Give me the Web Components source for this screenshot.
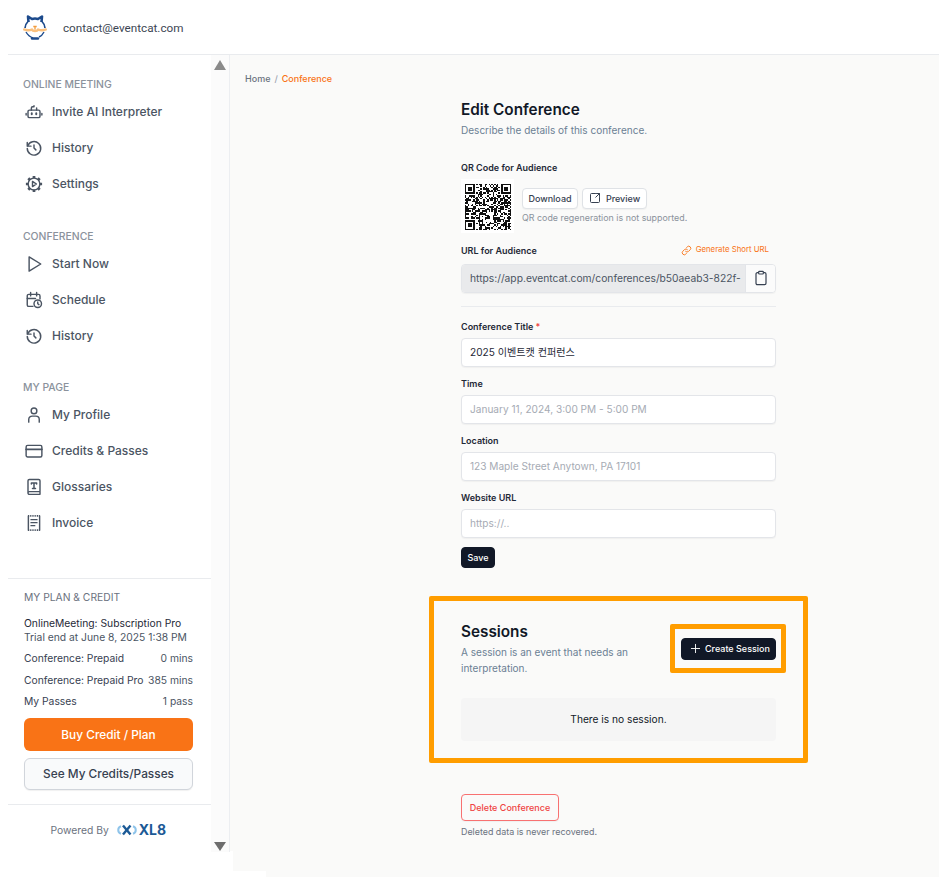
<!DOCTYPE html>
<html lang="en"><head><meta charset="utf-8"><title>Edit Conference</title>
<style>
html,body{margin:0;height:100%;background:#fff;}
body{font-family:Inter,"Noto Sans CJK KR",sans-serif;overflow:hidden;}
</style></head><body>
<ec-app>
  <ec-header slot="header" email="contact@eventcat.com"></ec-header>
  <ec-sidebar slot="sidebar">
    <ec-nav-section label="ONLINE MEETING">
      <ec-nav-item icon="robot">Invite AI Interpreter</ec-nav-item>
      <ec-nav-item icon="history">History</ec-nav-item>
      <ec-nav-item icon="gear">Settings</ec-nav-item>
    </ec-nav-section>
    <ec-nav-section label="CONFERENCE">
      <ec-nav-item icon="play">Start Now</ec-nav-item>
      <ec-nav-item icon="calendar">Schedule</ec-nav-item>
      <ec-nav-item icon="history">History</ec-nav-item>
    </ec-nav-section>
    <ec-nav-section label="MY PAGE">
      <ec-nav-item icon="user">My Profile</ec-nav-item>
      <ec-nav-item icon="card">Credits &amp; Passes</ec-nav-item>
      <ec-nav-item icon="book">Glossaries</ec-nav-item>
      <ec-nav-item icon="receipt">Invoice</ec-nav-item>
    </ec-nav-section>
    <ec-plan slot="footer"></ec-plan>
  </ec-sidebar>
  <ec-main slot="main"></ec-main>
</ec-app>
<script>
const ICONS={
robot:'<path d="M6 9.500h12a2 2 0 0 1 2 2v6a2 2 0 0 1-2 2H6a2 2 0 0 1-2-2v-6a2 2 0 0 1 2-2z"/><path d="M8.500 9.500V6.500a1.500 1.500 0 0 1 1.500-1.500h2V3.500M15.500 9.500V6.500"/><path d="M1.500 14v2M22.500 14v2"/><path d="M9 13.500v1.500M15 13.500v1.500" stroke-width="2.600"/>',
history:'<path d="M12 8v4l2.500 2.500"/><path d="M3.600 9.200A9 9 0 1 1 3 12.500"/><path d="M3 4.500v5h5"/>',
gear:'<circle cx="12" cy="12" r="7.800"/><path d="M12 1.200v3.200M12 19.600v3.200M1.200 12h3.200M19.600 12h3.200M4.400 4.400L6.600 6.600M17.400 17.400l2.200 2.200M4.400 19.600L6.600 17.400M17.400 6.600l2.200-2.200" stroke-width="3.600" stroke-linecap="butt"/><path d="M10 8.600v6.800l5.200-3.400z"/>',
play:'<path d="M5.500 2.500v19l15.500-9.500z"/>',
calendar:'<path d="M10.500 20.500H5a2 2 0 0 1-2-2v-12a2 2 0 0 1 2-2h13a2 2 0 0 1 2 2V10.500"/><path d="M7.500 2v4.500M15.500 2v4.500M3 10h11"/><circle cx="17" cy="17" r="5"/><path d="M17 14.500V17l1.600 1.200"/>',
user:'<circle cx="12" cy="6.500" r="3.800"/><path d="M5 21.500v-3.500A4.500 4.500 0 0 1 9.500 13.500h5a4.500 4.500 0 0 1 4.500 4.500V21.500"/>',
card:'<rect x="1.500" y="4.500" width="21" height="15.500" rx="2"/><path d="M1.500 9.800h21" stroke-width="2.400"/>',
book:'<path d="M5.800 21.800A1.800 1.800 0 0 1 4 20V3.800A1.800 1.800 0 0 1 5.800 2h12.400A1.800 1.800 0 0 1 20 3.800v18H5.800A1.800 1.800 0 0 1 4 20a1.800 1.800 0 0 1 1.800-1.800H20"/><path d="M8.500 8V6.500h7V8M12 6.500V14M10 14h4" stroke-width="2"/>',
receipt:'<path d="M4.500 2.500v19M19.500 2.500v19"/><path d="M4 2.500h16M4 21.500h16" stroke-dasharray="1.400 1" stroke-linecap="butt" stroke-width="2.200"/><path d="M8 7.500h8M8 11.500h8M8 15.500h5"/>',
ext:'<path d="M13 3H5a2 2 0 0 0-2 2v14a2 2 0 0 0 2 2h14a2 2 0 0 0 2-2v-8"/><path d="M13.500 10.500L21 3M15 3h6v6"/>',
link:'<path d="M10 14a4.500 4.500 0 0 0 6.400 0l3.600-3.600A4.500 4.500 0 0 0 13.600 4l-1.300 1.300"/><path d="M14 10a4.500 4.500 0 0 0-6.400 0L4 13.600A4.500 4.500 0 0 0 10.400 20l1.300-1.300"/>',
clip:'<rect x="4.500" y="4" width="15" height="18" rx="2"/><rect x="8.500" y="2" width="7" height="4" rx="1" fill="#fff"/>',
plus:'<path d="M12 3v18M3 12h18"/>'
};
function icon(n,size,sw,color){return `<svg width="${size}" height="${size}" viewBox="0 0 24 24" fill="none" stroke="${color||'currentColor'}" stroke-width="${sw||2}" stroke-linecap="round" stroke-linejoin="round" aria-hidden="true">${ICONS[n]}</svg>`;}
function def(name,css,html,init){
  customElements.define(name,class extends HTMLElement{
    constructor(){super();this.attachShadow({mode:'open'});}
    connectedCallback(){
      this.shadowRoot.innerHTML=`<style>${css}</style>`+(typeof html==='function'?html(this):html);
      if(init)init(this);
    }
  });
}
def('ec-app',`:host{display:grid;grid-template-columns:230px 1fr;grid-template-rows:55px 822px;height:877px;width:939px;background:#fff}
 .h{grid-column:1/3} .s{display:block} .m{display:block;min-width:0}`,
 `<div class="h"><slot name="header"></slot></div><div class="s"><slot name="sidebar"></slot></div><div class="m"><slot name="main"></slot></div>`);
def('ec-header',`:host{display:block;height:55px;margin-left:8px;box-sizing:border-box;border-bottom:1px solid #e9ebee;background:#fff}
 .r{display:flex;align-items:center;height:54px;padding:2px 0 0 15px;box-sizing:border-box;gap:16px;font:11.700px Roboto,sans-serif;color:#3c4653}
 svg{display:block;flex:none}`,
 t=>`<div class="r"><svg width="24" height="26" viewBox="0 0 24 26" fill="none">
  <path d="M5.500 7L5 1.500L9 4A9.500 9.500 0 0 1 15 4L19 1.500L18.500 7" stroke="#1c4a8c" stroke-width="2.600" stroke-linejoin="round"/>
  <path d="M5 6.500A10 10 0 0 0 2 13M19 6.500A10 10 0 0 1 22 13" stroke="#1c4a8c" stroke-width="1.700"/>
  <path d="M.3 14c3 1.500 5.500 1.800 8.500.6c1 1.800 5.400 1.800 6.400 0c3 1.200 5.500 .9 8.500-.6" stroke="#fbc17e" stroke-width="2.400"/>
  <path d="M10.300 11.500h3.400M12 11.500v3" stroke="#f29b3c" stroke-width="1.300"/>
  <path d="M3 17c2 3.500 4 5 7 6M21 17c-1 2-2.500 4-5 5" stroke="#1c4a8c" stroke-width="1.400"/>
  <path d="M9 23.500h6" stroke="#1c4a8c" stroke-width="2.400" stroke-linecap="round"/></svg><span>${t.getAttribute('email')}</span></div>`);
def('ec-sidebar',`:host{display:block;height:100%;position:relative;box-sizing:border-box;background:#fff}
 .track{position:absolute;right:0;top:0;width:18px;height:797px;background:#fbfbfb;border-right:1px solid #eceef1}
 .up,.dn{position:absolute;left:3px;width:0;height:0;border-left:6px solid transparent;border-right:6px solid transparent}
 .up{top:5px;border-bottom:10px solid #8a8a8a}.dn{bottom:1px;border-top:9px solid #6d6d6d}
 .wrap{display:flex;flex-direction:column;height:100%;box-sizing:border-box;padding-top:23px;padding-left:8px}
 .nav{width:203px;height:499px;display:flex;flex-direction:column;gap:27.500px;box-sizing:border-box}`,
 `<div class="track"><div class="up"></div><div class="dn"></div></div><div class="wrap"><div class="nav"><slot></slot></div><slot name="footer"></slot></div>`);
def('ec-nav-section',`:host{display:block;padding-left:15px}
 .l{font:500 10.400px/14px Inter,sans-serif;color:#8b929c;height:14px;margin-bottom:2px}`,
 t=>`<div class="l">${t.getAttribute('label')}</div><slot></slot>`);
def('ec-nav-item',`:host{display:flex;align-items:center;height:36px;color:#4b5563;font:500 12px/36px Inter,sans-serif;padding-left:2px}
 .i{width:20px;height:20px;margin-right:8px;flex:none;display:flex;align-items:center;justify-content:center;margin-left:-1px}`,
 t=>`<span class="i">${icon(t.getAttribute('icon'),18,1.900,'#4a5462')}</span><slot></slot>`);
def('ec-plan',`:host{display:block;width:203px;margin-top:1px;border-top:1px solid #e9ebee;box-sizing:border-box;color:#4b5563;font:400 10.300px/14px Inter,sans-serif;white-space:nowrap}
 .b{padding:11px 18px 13px 16px;height:225px;box-sizing:border-box}
 .t{font-weight:400;color:#6b7280;margin-bottom:12px;font-size:10.300px}
 .d{color:#1f2937}.m{color:#4b5563;margin-bottom:-1px}
 .r{display:flex;justify-content:space-between;margin-top:8px;color:#374151}.r span+span{color:#4b5563}.r.last{margin-top:7px}
 .btn{display:flex;align-items:center;justify-content:center;box-sizing:border-box;width:169px;border-radius:6px;font-weight:500;font-size:11.850px}
 .buy{height:33px;background:#f97316;color:#fff;margin-top:10px}
 .see{height:32px;margin-top:7px;background:#f9fafb;color:#374151;border:1px solid #d1d5db;box-shadow:0 1px 1px #0000000f}
 .f{height:50px;border-top:1px solid #e9ebee;display:flex;align-items:center;padding-left:42.500px;gap:8px;color:#6b7280;font-size:10.300px;box-sizing:border-box}
 .x{display:flex;align-items:center;gap:2px;color:#1c5a96;font:700 14px/1 Inter,sans-serif}`,
 `<div class="b"><div class="t">MY PLAN &amp; CREDIT</div><div class="d">OnlineMeeting: Subscription Pro</div><div class="m">Trial end at June 8, 2025 1:38 PM</div>
 <div class="r"><span>Conference: Prepaid</span><span>0 mins</span></div><div class="r"><span>Conference: Prepaid Pro</span><span>385 mins</span></div><div class="r last"><span>My Passes</span><span>1 pass</span></div>
 <div class="btn buy">Buy Credit / Plan</div><div class="btn see">See My Credits/Passes</div></div>
 <div class="f"><span>Powered By</span><span class="x"><svg width="20" height="12" viewBox="0 0 20 12" fill="none"><path d="M4 2.200A4 4 0 0 0 4 9.800M16 2.200A4 4 0 0 1 16 9.800" stroke="#8fc4ea" stroke-width="2"/><path d="M6 1.500L13.500 10.500" stroke="#1c5a96" stroke-width="2.400"/><path d="M13.500 1.500L6 10.500" stroke="#1c5a96" stroke-width="2.400"/></svg><span>XL8</span></span></div>`);
def('ec-btn',`:host{display:inline-flex;align-items:center;justify-content:center;gap:4px;box-sizing:border-box;height:21px;border-radius:4px;background:#fff;border:1px solid #dfe2e6;color:#374151;font:500 9px/1 Inter,sans-serif;padding:0 6px;box-shadow:0 1px 1px #0000000a}
 :host([kind=dark]){background:#111827;border-color:#111827;color:#fff;box-shadow:none}
 :host([kind=danger]){background:transparent;border-color:#f87171;color:#ef4444;height:27px}
 svg{display:block}`,
 t=>(t.getAttribute('icon')?icon(t.getAttribute('icon'),t.getAttribute('isize')||13,2,t.getAttribute('kind')==='dark'?'#fff':'#374151'):'')+'<slot></slot>');
def('ec-qr',`:host{display:block;width:53px;height:54px;background:#fff;flex:none}svg{display:block;margin:5px 0 0 4px}`,
 `<svg width="46" height="46" viewBox="0 0 33 33" shape-rendering="crispEdges"></svg>`,
 t=>{
  const N=33,g=[];let s=12345;
  const rnd=()=>{s=(s*1103515245+12345)&0x7fffffff;return (s>>16)&1};
  for(let y=0;y<N;y++){g[y]=[];for(let x=0;x<N;x++)g[y][x]=rnd();}
  const finder=(ox,oy)=>{for(let y=-1;y<8;y++)for(let x=-1;x<8;x++){const X=ox+x,Y=oy+y;if(X<0||Y<0||X>=N||Y>=N)continue;
    const ring=(x>=0&&x<=6&&y>=0&&y<=6)&&(x===0||x===6||y===0||y===6);const core=x>=2&&x<=4&&y>=2&&y<=4;g[Y][X]=(ring||core)?1:0;}};
  finder(0,0);finder(N-7,0);finder(0,N-7);
  let d='';for(let y=0;y<N;y++)for(let x=0;x<N;x++)if(g[y][x])d+=`M${x} ${y}h1v1h-1z`;
  t.shadowRoot.querySelector('svg').innerHTML=`<path d="${d}" fill="#111"/>`;
 });
def('ec-field',`:host{display:block;margin-top:9.500px}
 label{display:flex;height:13px;align-items:center;font:600 9px/13px Inter,sans-serif;color:#1f2937;margin-bottom:5px}
 i{color:#ef4444;font-style:normal;margin-left:2px}
 .in{box-sizing:border-box;height:29.500px;background:#fff;border:1px solid #e3e5e9;border-radius:4px;padding:0 8px;font:400 10.100px/27px Inter,"Noto Sans CJK KR",sans-serif;color:#1f2937;box-shadow:0 1px 1px #0000000a;white-space:nowrap;overflow:hidden}
 .ph{color:#a6abb4}`,
 t=>`<label>${t.getAttribute('label')}${t.hasAttribute('required')?'<i>*</i>':''}</label><div class="in ${t.hasAttribute('ph')?'ph':''}">${t.getAttribute('ph')||t.getAttribute('value')}</div>`);
def('ec-form',`:host{display:block;width:315px}
 h2{margin:0;font:600 15.300px/20px Inter,sans-serif;color:#111827}
 p{margin:2px 0 0;font:400 10.040px/16px Inter,sans-serif;color:#6b7f94}
 .lab{font:600 9px/13px Inter,sans-serif;color:#1f2937}
 .qrrow{display:flex;margin-top:4.500px;gap:8px}
 .qa{padding-top:9px;display:flex;flex-direction:column;}
 .bt{display:flex;gap:4px}
 .hint{font:400 8.900px/12px Inter,sans-serif;color:#8b929c;margin-top:3px}
 .u{display:flex;justify-content:space-between;align-items:center;margin-top:10.500px;height:14px}
 .gen{display:flex;align-items:center;gap:4px;color:#f97316;font:400 7.800px/1 Inter,sans-serif;padding-right:7px}
 .url{display:flex;margin-top:6.500px;height:29px;border:1px solid #e3e5e9;border-radius:4px;overflow:hidden;box-sizing:border-box;box-shadow:0 1px 1px #0000000a}
 .url div:first-child{flex:1;background:#e9eaec;color:#4b5563;font:400 10.270px/27px Inter,sans-serif;padding-left:8px;white-space:nowrap;overflow:hidden}
 .url div:last-child{width:29px;background:#fbfbfb;border-left:1px solid #e3e5e9;display:flex;align-items:center;justify-content:center}
 hr{border:0;border-top:1px solid #e9ebee;margin:13px 0 13px}
 ec-btn.save{margin-top:9px;height:21px;width:34px;padding:0;border-radius:4px;display:flex}
 .sec{margin-top:28px;margin-left:-32px;width:379px;height:167px;box-sizing:border-box;border:5px solid #ff9d00;border-radius:2px;padding:21px 27px 0 27px}
 .top{display:flex;justify-content:space-between;align-items:flex-start}
 .top p{width:175px;line-height:16px}
 .hl{border:5px solid #ff9d00;border-radius:2px;margin:2px -10px 0 0;box-sizing:border-box;width:116px;height:49px;display:flex;align-items:center;padding:0 5px 0 6px;flex:none}
 .hl ec-btn{height:22px;width:95px;padding:0 0 0 8px;justify-content:flex-start;gap:4px;flex:none}
 .empty{margin-top:22px;height:43px;background:#f5f5f5;border-radius:4px;display:flex;align-items:center;justify-content:center;font:400 10.200px/1 Inter,sans-serif;color:#111827}
 .del{margin-top:31px;display:flex}
 .note{font:400 8.900px/12px Inter,sans-serif;color:#6b7280;margin-top:5px}`,
 `<h2>Edit Conference</h2><p>Describe the details of this conference.</p>
 <div class="lab" style="margin-top:23px">QR Code for Audience</div>
 <div class="qrrow"><ec-qr></ec-qr><div class="qa"><div class="bt"><ec-btn style="width:56px;padding:0">Download</ec-btn><ec-btn icon="ext" isize="12" style="gap:5px;width:65px;padding:0">Preview</ec-btn></div><div class="hint">QR code regeneration is not supported.</div></div></div>
 <div class="u"><span class="lab">URL for Audience</span><span class="gen">${icon('link',11,2,'#f97316')}Generate Short URL</span></div>
 <div class="url"><div>https://app.eventcat.com/conferences/b50aeab3-822f-</div><div>${icon('clip',16,1.800,'#374151')}</div></div>
 <hr>
 <ec-field style="margin-top:0" label="Conference Title" required value="2025 이벤트캣 컨퍼런스"></ec-field>
 <ec-field label="Time" ph="January 11, 2024, 3:00 PM - 5:00 PM"></ec-field>
 <ec-field label="Location" ph="123 Maple Street Anytown, PA 17101"></ec-field>
 <ec-field label="Website URL" ph="https://.."></ec-field>
 <ec-btn class="save" kind="dark">Save</ec-btn>
 <div class="sec"><div class="top"><div><h2>Sessions</h2><p>A session is an event that needs an interpretation.</p></div>
  <div class="hl"><ec-btn kind="dark" icon="plus" isize="11">Create Session</ec-btn></div></div>
  <div class="empty">There is no session.</div></div>
 <div class="del"><ec-btn kind="danger" style="width:98px;padding:0">Delete Conference</ec-btn></div>
 <div class="note">Deleted data is never recovered.</div>`);
def('ec-main',`:host{display:block;height:100%;background:#fafaf9;box-sizing:border-box;padding:17px 0 0 15px;overflow:hidden;position:relative}
 :host::after{content:"";position:absolute;left:0;bottom:0;width:3px;height:26px;background:#fff}
 :host::before{content:"";position:absolute;left:0;bottom:0;width:36px;height:6px;background:#fff}
 .bc{font:500 9px/13px Inter,sans-serif;color:#6b7280;display:flex;gap:4px}.bc b{font-weight:500;color:#f97316}.bc span:nth-child(2){color:#9ca3af}
 ec-form{margin:15px 0 0 216px}`,
 `<div class="bc"><span>Home</span><span>/</span><b>Conference</b></div><ec-form></ec-form>`);
</script>
</body></html>
